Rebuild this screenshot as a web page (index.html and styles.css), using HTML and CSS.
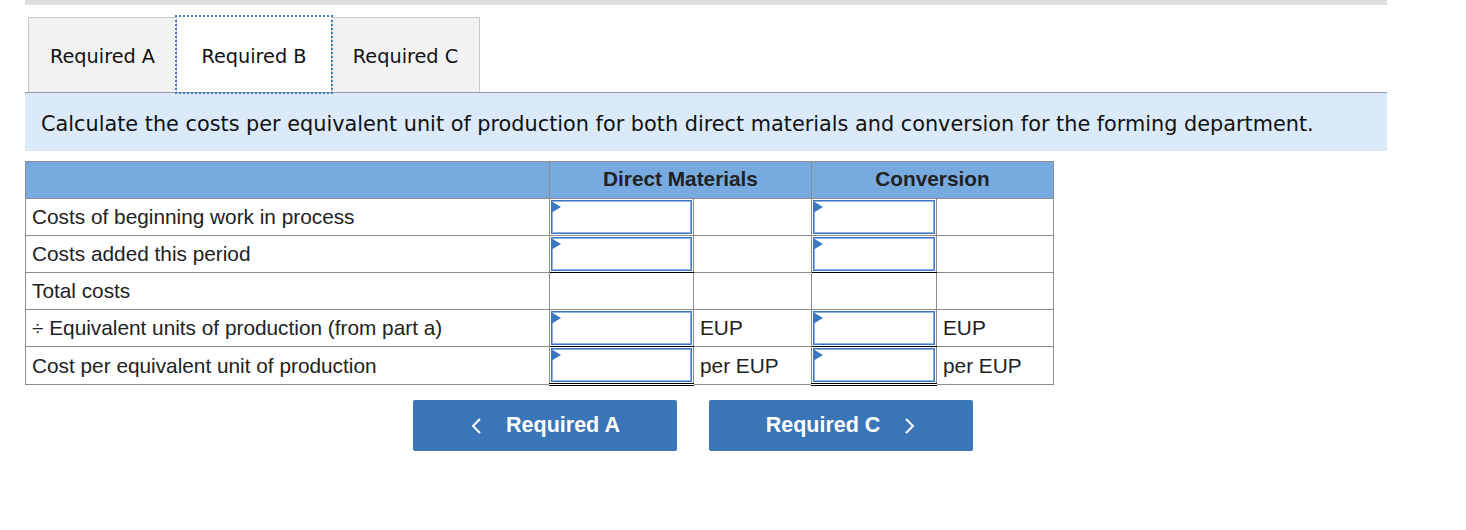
FILE: index.html
```html
<!DOCTYPE html>
<html lang="en">
<head>
    <meta charset="UTF-8">
    <title>Required B</title>
    <link rel="stylesheet" href="styles.css">
</head>
<body>

    <div class="question">
        <div class="top-bar"></div>

        <div class="tabs">
            <div class="tab">Required A</div>
            <div class="tab active">Required B</div>
            <div class="tab">Required C</div>
        </div>

        <div class="prompt">
            Calculate the costs per equivalent unit of production for both direct materials and conversion for the forming department.
        </div>

        <table class="worksheet">
            <tr class="head">
                <th class="label-col"></th>
                <th colspan="2">Direct Materials</th>
                <th colspan="2">Conversion</th>
            </tr>
            <tr>
                <td>Costs of beginning work in process</td>
                <td class="entry dm"><span class="field"></span></td>
                <td class="unit"></td>
                <td class="entry cv"><span class="field"></span></td>
                <td class="unit cv"></td>
            </tr>
            <tr>
                <td>Costs added this period</td>
                <td class="entry dm sum-line"><span class="field"></span></td>
                <td class="unit"></td>
                <td class="entry cv sum-line"><span class="field"></span></td>
                <td class="unit cv"></td>
            </tr>
            <tr>
                <td>Total costs</td>
                <td class="entry dm"></td>
                <td class="unit"></td>
                <td class="entry cv"></td>
                <td class="unit cv"></td>
            </tr>
            <tr>
                <td>÷ Equivalent units of production (from part a)</td>
                <td class="entry dm sum-line"><span class="field"></span></td>
                <td class="unit">EUP</td>
                <td class="entry cv sum-line"><span class="field"></span></td>
                <td class="unit cv">EUP</td>
            </tr>
            <tr>
                <td>Cost per equivalent unit of production</td>
                <td class="entry dm total-line"><span class="field"></span></td>
                <td class="unit">per EUP</td>
                <td class="entry cv total-line"><span class="field"></span></td>
                <td class="unit cv">per EUP</td>
            </tr>
        </table>

        <div class="nav">
            <button class="nav-btn">
                <svg width="12" height="18" viewBox="0 0 12 18"><polyline points="10,2 3,9 10,16" fill="none" stroke="white" stroke-width="2"/></svg>
                <span>Required A</span>
            </button>
            <button class="nav-btn">
                <span>Required C</span>
                <svg width="12" height="18" viewBox="0 0 12 18"><polyline points="2,2 9,9 2,16" fill="none" stroke="white" stroke-width="2"/></svg>
            </button>
        </div>
    </div>

</body>
</html>
```

FILE: styles.css
```css
body {
    margin: 0;
    background: white;
    font-family: "DejaVu Sans", Verdana, sans-serif;
    color: #111;
}
.question {
    margin-left: 25px;
    width: 1362px;
}
.top-bar {
    height: 5px;
    background: #dfdfdf;
}
.tabs {
    display: flex;
    margin-top: 12px;
    padding-left: 3px;
    border-bottom: 1px solid #999;
}
.tab {
    width: 149px;
    height: 75px;
    display: flex;
    align-items: center;
    justify-content: center;
    padding-top: 2px;
    font-size: 19.3px;
    background: #f2f2f2;
    border: 1px solid #c8c8c8;
    border-bottom: none;
    box-sizing: border-box;
}
.tab.active {
    width: 154px;
    background: white;
    border-color: white;
    outline: 2px dotted #3f7cc7;
    position: relative;
}
.prompt {
    background: #dbeaf8;
    height: 58px;
    padding-left: 16px;
    padding-top: 4px;
    box-sizing: border-box;
    display: flex;
    align-items: center;
    font-size: 20.8px;
}
.worksheet {
    margin-top: 10px;
    border-collapse: collapse;
    font-family: "Liberation Sans", Arial, sans-serif;
    font-size: 20.8px;
    color: #222;
}
.worksheet th,
.worksheet td {
    border: 1px solid #8c8c8c;
    height: 34px;
    padding: 0;
}
.worksheet td {
    padding-left: 6px;
    text-align: left;
}
.head th {
    background: #77abe0;
    font-weight: bold;
    text-align: center;
    padding-bottom: 2px;
}
.label-col {
    width: 523px;
}
.worksheet td.entry {
    padding: 1px;
    position: relative;
}
.worksheet td.dm {
    width: 141px;
}
.worksheet td.cv {
    width: 122px;
}
.worksheet td.unit {
    width: 111px;
}
.worksheet td.unit.cv {
    width: 110px;
}
.worksheet td.sum-line {
    border-bottom: 1px solid black;
}
.worksheet td.total-line {
    border-bottom: 3px double black;
}
.field {
    display: block;
    height: 34px;
    border: 1px solid #3e74bb;
    box-shadow: inset 0 0 0 1px #8db3e2;
    box-sizing: border-box;
    background: white;
}
/* little flag in the corner of each answer box */
.field::before {
    content: "";
    position: absolute;
    left: 1px;
    top: 2px;
    border-top: 6px solid transparent;
    border-bottom: 6px solid transparent;
    border-left: 10px solid #3a78c3;
}
.nav {
    display: flex;
    gap: 32px;
    padding-left: 388px;
    margin-top: 14px;
}
.nav-btn {
    width: 264px;
    height: 51px;
    background: #3a76b7;
    color: white;
    border: none;
    border-radius: 2px;
    font-family: "Liberation Sans", Arial, sans-serif;
    font-weight: bold;
    font-size: 21.5px;
    display: flex;
    align-items: center;
    justify-content: center;
    gap: 24px;
    cursor: pointer;
}
```
